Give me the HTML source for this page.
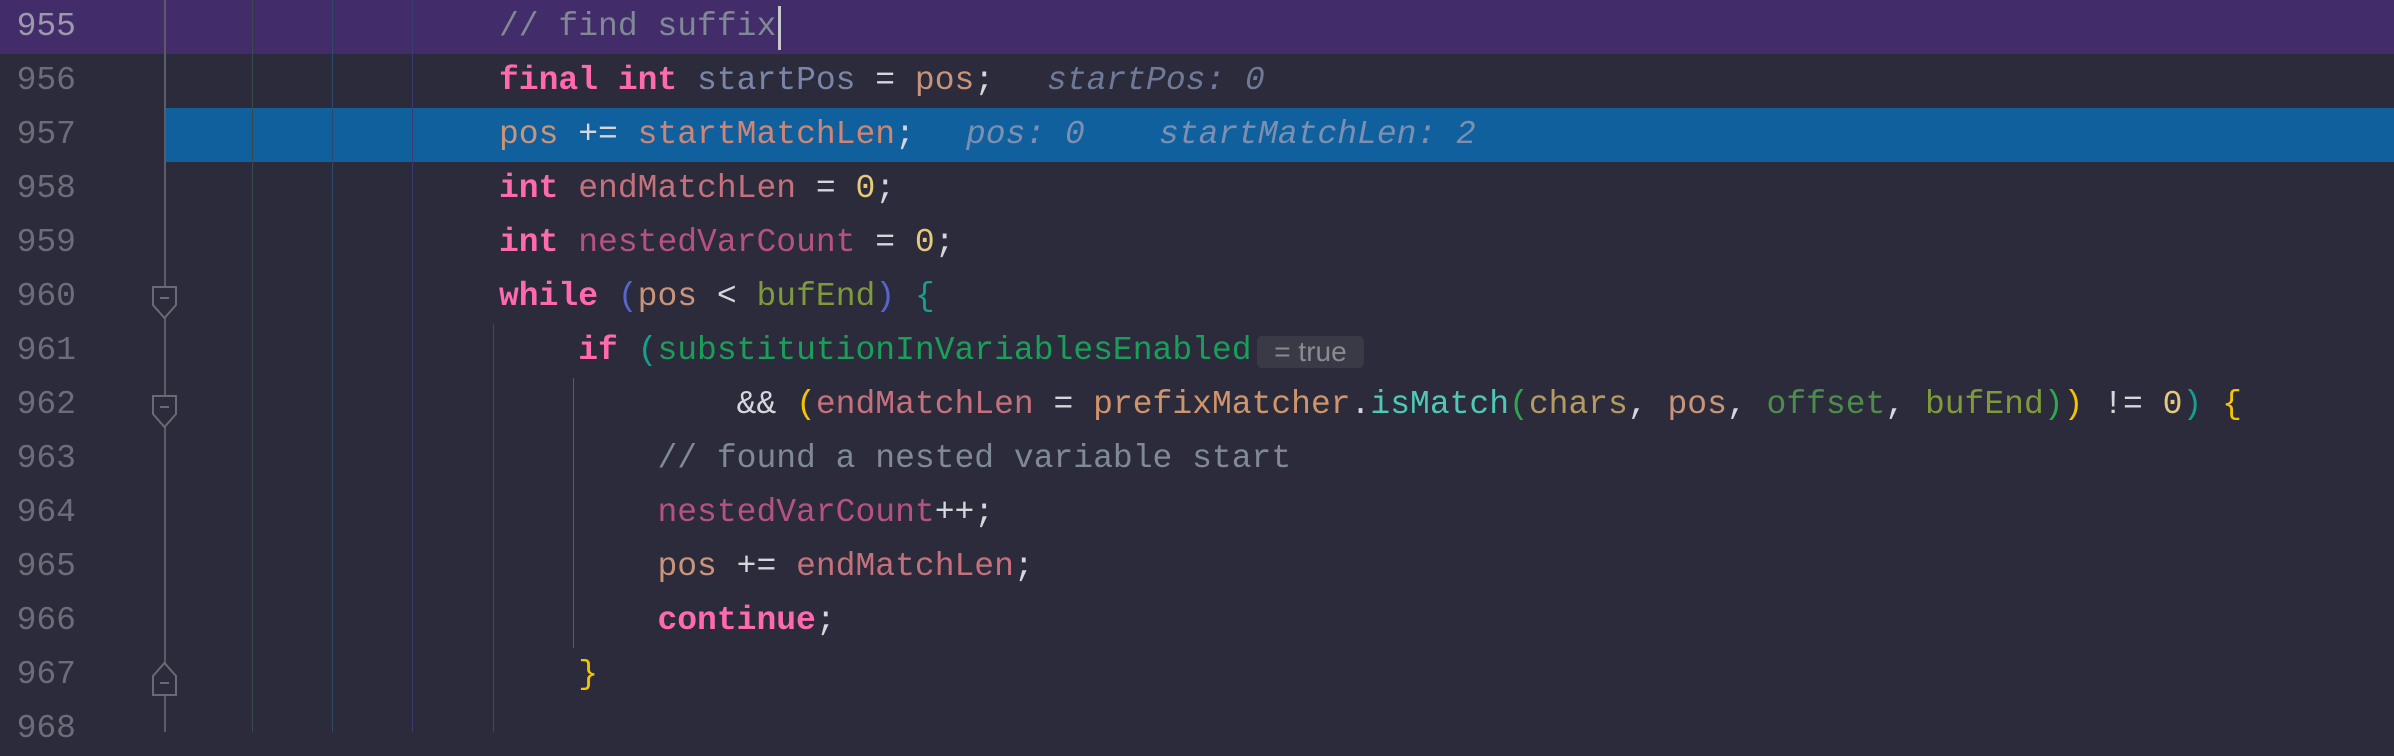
<!DOCTYPE html>
<html><head><meta charset="utf-8"><style>
html,body{margin:0;padding:0}
body{width:2394px;height:732px;background:#2b2b3b;position:relative;overflow:hidden;font-family:"Liberation Mono",monospace;font-size:33px}
.band{position:absolute;height:54px}
.ln{position:absolute;left:0;width:76px;text-align:right;color:#6c6d78;line-height:54px;height:54px}
.code{position:absolute;left:499px;white-space:pre;line-height:54px;height:54px;color:#d6d6dc}
.v{position:absolute;top:0;width:2px}
.k{color:#ff6aaf;font-weight:bold}
.c{color:#7f8a95}
.h{position:absolute;font-style:italic;color:#6f7a98;white-space:pre;line-height:54px}
.fold{position:absolute;left:152px}
</style></head><body>
<div class="band" style="top:0;left:0;width:2394px;background:#432c6a"></div>
<div class="band" style="top:108px;left:165px;width:2229px;background:#11609e"></div>
<div class="v" style="left:164px;height:732px;background:#5c5c66"></div>
<div class="v" style="left:252px;height:732px;background:#3a4a4c;width:1px"></div>
<div class="v" style="left:332px;height:732px;background:#2f4a66;width:1px"></div>
<div class="v" style="left:412px;height:732px;background:#3a3c70;width:1px"></div>
<div class="v" style="left:493px;top:324px;height:408px;background:#1c5a54;width:1px"></div>
<div class="v" style="left:573px;top:378px;height:270px;background:#6a5a40;width:1px"></div>

<div class="ln" style="top:0;color:#9a9aa8">955</div>
<div class="ln" style="top:54px">956</div>
<div class="ln" style="top:108px">957</div>
<div class="ln" style="top:162px">958</div>
<div class="ln" style="top:216px">959</div>
<div class="ln" style="top:270px">960</div>
<div class="ln" style="top:324px">961</div>
<div class="ln" style="top:378px">962</div>
<div class="ln" style="top:432px">963</div>
<div class="ln" style="top:486px">964</div>
<div class="ln" style="top:540px">965</div>
<div class="ln" style="top:594px">966</div>
<div class="ln" style="top:648px">967</div>
<div class="ln" style="top:702px">968</div>

<svg class="fold" style="top:286px" width="26" height="34"><path d="M1 1H24V19L12.5 32L1 19Z" fill="#2b2b3b" stroke="#6a6a72" stroke-width="2"/><path d="M8 12H17" stroke="#6a6a72" stroke-width="2"/></svg>
<svg class="fold" style="top:395px" width="26" height="34"><path d="M1 1H24V19L12.5 32L1 19Z" fill="#2b2b3b" stroke="#6a6a72" stroke-width="2"/><path d="M8 12H17" stroke="#6a6a72" stroke-width="2"/></svg>
<svg class="fold" style="top:662px" width="26" height="34"><path d="M1 33H24V14L12.5 1L1 14Z" fill="#2b2b3b" stroke="#6a6a72" stroke-width="2"/><path d="M8 21H17" stroke="#6a6a72" stroke-width="2"/></svg>

<div class="code" style="top:0"><span class="c">// find suffix</span></div>
<div style="position:absolute;left:778px;top:6px;width:3px;height:44px;background:#c8c8d0"></div>
<div class="code" style="top:54px"><span class="k">final int</span> <span style="color:#7a85a8">startPos</span> = <span style="color:#c99478">pos</span>;</div>
<div class="h" style="left:1047px;top:54px">startPos: 0</div>
<div class="code" style="top:108px"><span style="color:#c99478">pos</span> += <span style="color:#cf8574">startMatchLen</span>;</div>
<div class="h" style="left:966px;top:108px;color:#7d8fb0">pos: 0</div>
<div class="h" style="left:1159px;top:108px;color:#7d8fb0">startMatchLen: 2</div>
<div class="code" style="top:162px"><span class="k">int</span> <span style="color:#c5717c">endMatchLen</span> = <span style="color:#e6c97a">0</span>;</div>
<div class="code" style="top:216px"><span class="k">int</span> <span style="color:#b5527f">nestedVarCount</span> = <span style="color:#e6c97a">0</span>;</div>
<div class="code" style="top:270px"><span class="k">while</span> <span style="color:#5566cc">(</span><span style="color:#c99478">pos</span> &lt; <span style="color:#7e9a3a">bufEnd</span><span style="color:#5566cc">)</span> <span style="color:#13a090">{</span></div>
<div class="code" style="top:324px">    <span class="k">if</span> <span style="color:#13a090">(</span><span style="color:#1a9e5a">substitutionInVariablesEnabled</span></div>
<div style="position:absolute;left:1257px;top:336px;width:107px;height:32px;background:#3a3a46;border-radius:5px;color:#8a8a90;font-family:'Liberation Sans',sans-serif;font-size:28px;line-height:32px;text-align:center">= true</div>
<div class="code" style="top:378px">            &amp;&amp; <span style="color:#f5c400">(</span><span style="color:#c5717c">endMatchLen</span> = <span style="color:#d0946a">prefixMatcher</span>.<span style="color:#4fc8b5">isMatch</span><span style="color:#2ea84e">(</span><span style="color:#b59a60">chars</span>, <span style="color:#c99478">pos</span>, <span style="color:#4a8e4a">offset</span>, <span style="color:#7e9a3a">bufEnd</span><span style="color:#2ea84e">)</span><span style="color:#f5c400">)</span> != <span style="color:#e6c97a">0</span><span style="color:#13a090">)</span> <span style="color:#f5c400">{</span></div>
<div class="code" style="top:432px">        <span class="c">// found a nested variable start</span></div>
<div class="code" style="top:486px">        <span style="color:#b5527f">nestedVarCount</span>++;</div>
<div class="code" style="top:540px">        <span style="color:#c99478">pos</span> += <span style="color:#c5717c">endMatchLen</span>;</div>
<div class="code" style="top:594px">        <span class="k">continue</span>;</div>
<div class="code" style="top:648px">    <span style="color:#f5c400">}</span></div>
</body></html>
